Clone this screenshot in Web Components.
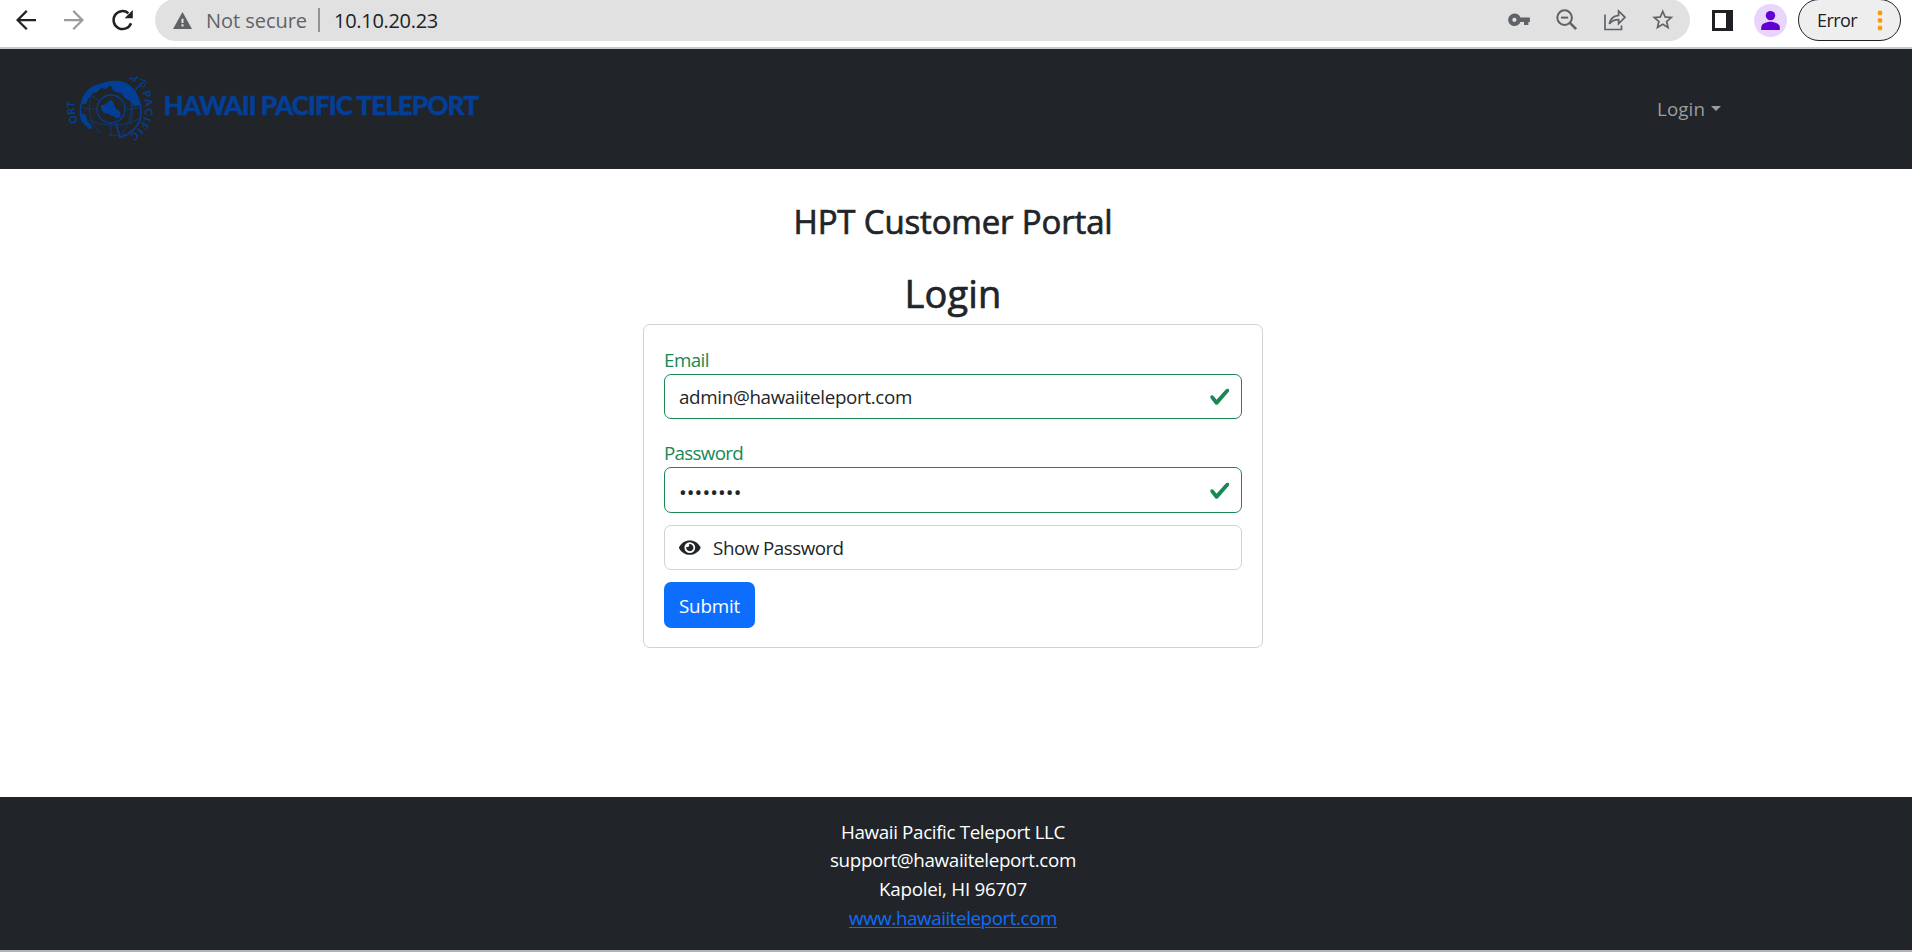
<!DOCTYPE html>
<html lang="en">
<head>
<meta charset="utf-8">
<title>HPT Customer Portal</title>
<style>
html,body{margin:0;padding:0;background:#fff;overflow:hidden}
body{font-family:"Open Sans","Noto Sans",sans-serif;font-size:18.8px;line-height:28.8px;color:#212529}
</style>
</head>
<body>
<portal-app></portal-app>
<script>
const define=(name,html,setup)=>{
  const t=document.createElement('template');t.innerHTML=html;
  customElements.define(name,class extends HTMLElement{
    constructor(){super();this.attachShadow({mode:'open'}).append(t.content.cloneNode(true));}
    connectedCallback(){if(setup)setup(this,this.shadowRoot);}
  });
};

/* A single line of text tracked to a given advance width. */
define('tracked-text',`<style>:host{display:inline-block;white-space:nowrap}span{display:inline-block;text-decoration:var(--line,none);text-decoration-thickness:1px;text-underline-offset:2px}</style><span><slot></slot></span>`,(el,root)=>{
  const w=parseFloat(el.getAttribute('w')),s=root.querySelector('span');
  requestAnimationFrame(()=>{
    const n=el.textContent.length;
    s.style.letterSpacing='0';
    const sp=(w-s.getBoundingClientRect().width)/n;
    s.style.letterSpacing=sp.toFixed(3)+'px';
    el.style.width=w+'px';
  });
});

const icons={
  back:['0 0 24 24','<path fill="currentColor" d="M20 11.1H7.4l5.8-5.8L12 4l-8 8 8 8 1.25-1.25L7.4 12.9H20z"/>'],
  forward:['0 0 24 24','<path fill="currentColor" d="M4 11.1h12.6l-5.8-5.8L12 4l8 8-8 8-1.25-1.25 5.85-5.85H4z"/>'],
  reload:['0 0 30 30','<path fill="none" stroke="currentColor" stroke-width="2.5" d="M24 18.2A9 9 0 1 1 21.4 8.2"/><path fill="currentColor" d="M25.8 5v8.2h-8.2z"/>'],
  warn:['0 0 19 17','<path fill="currentColor" d="M9.5 0 19 17H0z"/><path fill="#e1e1e1" d="M8.5 6.8h2v4.2h-2zM8.5 12.3h2v2.1h-2z"/>'],
  key:['0 0 30 30','<path fill="currentColor" fill-rule="evenodd" d="M10.4 8.500a6.300 6.300 0 1 0 6 8.400h3.600V20h4.400v-3.100h1.500v-4.300h-9.500A6.300 6.300 0 0 0 10.400 8.500zm0 4.200a2.100 2.100 0 1 1 0 4.200 2.100 2.100 0 0 1 0-4.200z"/>'],
  zoom:['0 0 30 30','<g fill="none" stroke="currentColor"><circle cx="12.600" cy="12.600" r="7.300" stroke-width="2"/><path stroke-width="2" d="M9 12.600h7.200"/><path stroke-width="2.600" d="m17.700 17.700 6.500 6.500"/></g>'],
  share:['0 0 30 30','<g fill="none" stroke="currentColor" stroke-width="1.700"><path d="M5 9.500v15h16.500v-4"/><path stroke-linejoin="miter" d="M18.600 10.400V6l6.400 6.300-6.400 6.300v-4c-4.500 0-7 1.200-9.300 4.400.8-4.700 3.800-8 9.300-8.600z"/></g>'],
  star:['0 0 24 24','<path fill="currentColor" d="M22 9.240l-7.190-.620L12 2 9.190 8.630 2 9.240l5.460 4.730L5.820 21 12 17.270 18.180 21l-1.630-7.030L22 9.240zM12 15.400l-3.760 2.270 1-4.280-3.320-2.880 4.380-.380L12 6.100l1.710 4.040 4.380.380-3.320 2.880 1 4.280L12 15.400z"/>'],
  panel:['0 0 21 21','<path fill="#1f2023" d="M0 0h21v21H0z"/><path fill="#fff" d="M3 3h11v15H3z"/>'],
  avatar:['0 0 33 33','<circle cx="16.500" cy="16.500" r="16.500" fill="#e8d4fd"/><circle cx="16.500" cy="11.600" r="4.700" fill="#6200d1"/><path fill="#6200d1" d="M7.200 26v-2.600c0-3.400 4.800-5.600 9.300-5.600s9.300 2.200 9.300 5.600V26z"/>'],
  dots:['0 0 6 21','<g fill="#f99a0b"><circle cx="3" cy="3" r="2.400"/><circle cx="3" cy="10.500" r="2.400"/><circle cx="3" cy="18" r="2.400"/></g>'],
  check:['0 0 8 8','<path fill="#198754" d="M2.300 6.730.600 4.530c-.400-1.040.460-1.400 1.100-.800l1.100 1.400 3.400-3.800c.600-.630 1.600-.270 1.200.700l-4 4.600c-.430.500-.800.400-1.100.100z"/>'],
  eye:['0 0 576 512','<path fill="currentColor" d="M572.520 241.400C518.290 135.590 410.930 64 288 64S57.680 135.640 3.480 241.410a32.350 32.350 0 0 0 0 29.190C57.710 376.410 165.070 448 288 448s230.320-71.640 284.520-177.410a32.350 32.350 0 0 0 0-29.190zM288 400a144 144 0 1 1 144-144 143.930 143.930 0 0 1-144 144zm0-240a95.310 95.310 0 0 0-25.310 3.790 47.850 47.850 0 0 1-66.900 66.900A95.780 95.780 0 1 0 288 160z"/>'],
  caret:['0 0 10 5','<path fill="currentColor" d="M0 0h10L5 5z"/>']
};
define('ui-icon',`<style>:host{display:block;flex:none}svg{display:block;width:100%;height:100%}</style><svg></svg>`,(el,root)=>{
  const [vb,body]=icons[el.getAttribute('name')],s=root.querySelector('svg');
  s.setAttribute('viewBox',vb);s.innerHTML=body;
  el.style.width=el.getAttribute('w')+'px';
  el.style.height=(el.getAttribute('h')||el.getAttribute('w'))+'px';
});

define('browser-bar',`<style>
:host{display:flex;box-sizing:border-box;height:49px;background:#fff;border-bottom:2px solid #c5c9cc;padding-left:11px;color:#202124;line-height:30px}
.nav{display:flex;gap:18px;padding-top:4.500px}
.off{color:#9c9c9c}
.omni{display:flex;align-items:center;box-sizing:border-box;width:1535px;height:42px;margin:-1px 0 0 18px;padding:0 12.500px 0 18px;border-radius:21px;background:#e1e1e1;color:#5f6368;flex:none}
.omni .state{margin-left:14px;margin-top:2px;font-size:20px}
.sep{width:2px;height:24px;background:#919395;margin:0 14px 0 11px}
.url{color:#202124;font-size:20px;margin-top:2px}
.tools{display:flex;gap:18px;margin-left:auto}
.tools div{width:30px;height:30px;display:flex;align-items:center;justify-content:center}
.panel{margin:9.500px 0 0 22px}.avatar{margin:4px 0 0 21px}
.err{box-sizing:border-box;display:flex;align-items:center;width:103px;height:42px;margin:-1px 0 0 11px;padding-left:18px;border:1.500px solid #222;border-radius:21px;background:#eee;font-size:18px}
.err tracked-text{margin-top:-1px}
.err ui-icon{margin-left:20px}
</style>
<div class="nav"><ui-icon name="back" w="30"></ui-icon><ui-icon class="off" name="forward" w="30"></ui-icon><ui-icon name="reload" w="30"></ui-icon></div>
<div class="omni"><ui-icon name="warn" w="19" h="17"></ui-icon><tracked-text class="state" w="101">Not secure</tracked-text><div class="sep"></div><tracked-text class="url" w="104">10.10.20.23</tracked-text>
<div class="tools"><div><ui-icon name="key" w="30"></ui-icon></div><div><ui-icon name="zoom" w="30"></ui-icon></div><div><ui-icon name="share" w="30"></ui-icon></div><div><ui-icon name="star" w="25.500"></ui-icon></div></div></div>
<ui-icon class="panel" name="panel" w="21"></ui-icon><ui-icon class="avatar" name="avatar" w="33"></ui-icon>
<div class="err"><tracked-text w="40">Error</tracked-text><ui-icon name="dots" w="6" h="21"></ui-icon></div>`);

define('globe-logo',`<style>:host{display:block;width:90px;height:76px;flex:none}svg{display:block;overflow:visible;color:#033f97}text{font:700 10.500px Lato,sans-serif;fill:#033f97}</style>
<svg width="90" height="76" viewBox="65 71 90 76">
<defs>
<path id="right" d="M142.500 92C146.500 103 146.500 113 142 122C138.500 129 134 133.500 121 139"/>
<path id="left" d="M79 123A34 34 0 0 1 80 88"/>
<clipPath id="ball"><path d="M89 129C75 118 78 94 94 86.500c12-5 23-7 32-3 13 8 17 24 14 36z"/></clipPath>
</defs>
<g fill="none" stroke="#033f97" stroke-width=".9">
<path stroke-width="1.500" d="M83 123C78 112 80 94 94 86.500c12-5 23-7 32-3 13 8 17 24 14 36-3 9-12 16-20 18l-4-14"/>
<path d="M82 107c4 2 9 2 14 2M125 109c6 1 11-1 15-2M83 118c11 5 20 7 30 7s19-2 27-7M109 135.500c6 .5 11 0 16-2M93 91c-5 11-5 24 1 35 2 4 5 5 7 7M111 123v13M129 94c4 12 3 25-6 38M89 94l11 7M127 91c6 8 7 22 3 33" opacity=".7"/>
<circle cx="111" cy="109" r="14" fill="#212529" stroke-width="1.300"/>
<path stroke-width="1.100" d="m134 91 8-8m-2-4 7 3"/><circle cx="142.500" cy="85" r="2.200"/>
</g>
<g fill="#033f97">
<path d="m110.300 100 2 1 2 3.500 1 4 3 1.500 2.500 3-1 2 1.500 2-3 .500-2 1.500-2-3-2.500.500-2.500-2.500-5.500-1-2.500-3.500-.500-4 4.500-1z"/>
<g clip-path="url(#ball)"><path d="m112 88 3-6 9-2 10 6 6 9 1 9-4 2-3 0-4-5-5-3-4-5-5-1-3-2zM82 104l2-14 10-6 16-3 6 2-2 4-5-1-3 3-5-1-4 4-5 1-2 4-2 2-2 5zM80 113l6 2 1 6 4 4 2 6-8-1-6-8z"/></g>
<path d="m129 78.500 2-1.500 2 1-1 2zM132.500 81l4-5 1.800 1-4.300 5z"/>
</g>
<text><textPath href="#right" textLength="49" lengthAdjust="spacing">PACIFIC</textPath></text>
<text><textPath href="#left" startOffset="1">ORT</textPath></text>
</svg>`);

define('site-header',`<style>
:host{display:flex;align-items:center;height:120px;box-sizing:border-box;background:#212529;padding:0 191px 0 65px}
.brand{font:900 26.300px/30px Lato,sans-serif;color:#033f97;-webkit-text-stroke:.35px #033f97;margin:0 auto 9px 8.500px}
.login{display:flex;align-items:center;gap:6px;color:#9b9d9e}
.login ui-icon{margin-top:-1px}
</style><globe-logo></globe-logo><tracked-text class="brand" w="314.500">HAWAII PACIFIC TELEPORT</tracked-text>
<div class="login"><tracked-text w="48">Login</tracked-text><ui-icon name="caret" w="10" h="5"></ui-icon></div>`);

define('form-field',`<style>
:host{display:block}
.label{box-sizing:border-box;color:#198754;height:29px;line-height:29px;padding-top:1px}
.box{box-sizing:border-box;height:var(--h,45px);border:1px solid #198754;border-radius:7px;display:flex;align-items:center;justify-content:space-between;padding:0 10.800px 0 14px}
::slotted(:not([slot])){margin-top:2px}
ui-icon{margin-top:1px}
</style><div class="label"><slot name="label"></slot></div><div class="box"><slot></slot><ui-icon name="check" w="21.600"></ui-icon></div>`);

define('login-card',`<style>
:host{display:block;box-sizing:border-box;width:620px;height:324px;border:1px solid #d1d2d3;border-radius:7px;padding:20px}
.pw{margin-top:19px;--h:46px}
.dots{line-height:38px;font-size:20.500px;padding-top:1px}
.show{box-sizing:border-box;height:45px;margin-top:12px;border:1px solid #ced4da;border-radius:7px;display:flex;align-items:center;gap:12.500px;padding-left:14px}
.show tracked-text,.submit tracked-text{margin-top:2px}
.submit{margin-top:12px;width:91px;height:46px;border-radius:7px;background:#0d6efd;color:#fff;display:flex;align-items:center;justify-content:center}
</style>
<form-field><tracked-text slot="label" w="45">Email</tracked-text><tracked-text w="233">admin@hawaiiteleport.com</tracked-text></form-field>
<form-field class="pw"><tracked-text slot="label" w="79">Password</tracked-text><tracked-text class="dots" w="62.500">••••••••</tracked-text></form-field>
<div class="show"><ui-icon name="eye" w="21.600" h="19.200"></ui-icon><tracked-text w="130.500">Show Password</tracked-text></div>
<div class="submit"><tracked-text w="61">Submit</tracked-text></div>`);

define('site-footer',`<style>
:host{display:flex;flex-direction:column;align-items:center;box-sizing:border-box;height:155px;padding:20.500px 6px 0 0;background:#212529;border-bottom:2px solid #b3b2b7;color:#fff}
.link{color:#0d6efd;--line:underline}
</style>
<tracked-text w="224">Hawaii Pacific Teleport LLC</tracked-text><tracked-text w="246">support@hawaiiteleport.com</tracked-text><tracked-text w="148">Kapolei, HI 96707</tracked-text><tracked-text class="link" w="208">www.hawaiiteleport.com</tracked-text>`);

define('portal-app',`<style>
:host{display:flex;flex-direction:column;width:1912px;height:952px}
main{flex:1;display:flex;flex-direction:column;align-items:center;padding:33px 6px 0 0}
h1,h2{margin:0;font-weight:400;-webkit-text-stroke:.7px #212529}
h1{font-size:33px;line-height:40px;height:40px}
h2{font-size:38px;line-height:46px;height:46px;margin:28px 0 8px}
</style><browser-bar></browser-bar><site-header></site-header>
<main><h1><tracked-text w="319">HPT Customer Portal</tracked-text></h1><h2><tracked-text w="97">Login</tracked-text></h2><login-card></login-card></main>
<site-footer></site-footer>`);
</script>
</body>
</html>
